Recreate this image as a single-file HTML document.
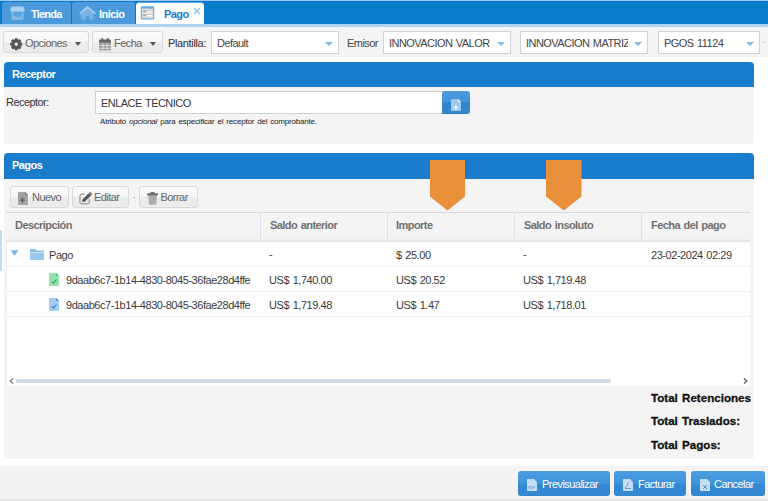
<!DOCTYPE html>
<html><head><meta charset="utf-8">
<style>
*{box-sizing:border-box;margin:0;padding:0}
html,body{width:768px;height:501px;overflow:hidden;background:#fff;font-family:"Liberation Sans",sans-serif;font-size:11px;color:#333;letter-spacing:-0.55px;word-spacing:1px}
div,span,svg{position:absolute}
.t{white-space:nowrap;line-height:1}
#topbar{left:0;top:0;width:768px;height:27px;background:#0a7bcd}
.topline{left:0;top:0;width:768px;height:1px;background:#9dc7e9}
.band{left:0;top:24px;width:768px;height:3px;background:#b2d2ec}
.tab{top:2px;height:22px;background:#4b9bdc;border-radius:3px 3px 0 0;color:#fff;font-weight:bold}
.tab.sel{background:#fff;color:#1c7ccc;top:3px;height:21px;box-shadow:0 -1px 0 #5aa5e0}
#toolbar{left:0;top:27px;width:768px;height:30px;background:#f4f4f4}
.btn{height:22px;border:1px solid #d9d9d9;border-radius:3px;background:linear-gradient(#fafafa 0,#f6f6f6 50%,#ebebeb 50%,#ececec 100%);color:#666}
.sbox{top:31px;height:23px;border:1px solid #d3d3d3;background:#fff;color:#444}
.caret{width:0;height:0;border-left:4px solid transparent;border-right:4px solid transparent;border-top:4px solid #80b9e6}
.dcaret{width:0;height:0;border-left:3px solid transparent;border-right:3px solid transparent;border-top:4px solid #555}
.panel{left:4px;width:750px;background:#f4f4f4;border-radius:4px}
.phead{left:0;top:0;width:750px;height:25px;background:#1a7dcb;border-radius:4px 4px 0 0;color:#fff;font-weight:bold}
.gh{color:#707070;font-weight:bold}
.cell{color:#3a3a3a;letter-spacing:-0.45px}
.vline{top:212px;width:1px;height:30px;background:#e0e0e0}
.hline{left:7px;width:743px;height:1px;background:#f1f1f1}
.tot{color:#111;font-weight:bold;font-size:11.6px;letter-spacing:0;-webkit-text-stroke:0.3px #111}
.fbtn{top:471px;height:25px;border-radius:3px;background:linear-gradient(#4b9de0 0%,#3f93d9 50%,#3589d2 55%,#3186d0 100%);color:#fff}
</style></head><body>
<div id="topbar">
  <div class="topline"></div>
  <div class="band"></div>
  <div class="tab" style="left:2px;width:69px">
    <svg style="left:8px;top:4px" width="15" height="14" viewBox="0 0 15 14"><rect x="1.5" y="4.5" width="12" height="9.5" rx="1" fill="#80b9e8"/><rect x="3.5" y="6" width="8" height="4.5" fill="#5ba1dd"/><path d="M2.5 0.4h10a1.5 1.5 0 0 1 1.4 1L14.6 4c0 1-.7 1.6-1.4 1.6s-1.4-.7-1.4-1.2c0 .5-.7 1.2-1.4 1.2s-1.4-.7-1.4-1.2c0 .5-.7 1.2-1.5 1.2s-1.4-.7-1.4-1.2c0 .5-.7 1.2-1.4 1.2S3.1 4.9 3.1 4.4c0 .5-.7 1.2-1.4 1.2S.4 5 .4 4l.7-2.6a1.5 1.5 0 0 1 1.4-1z" fill="#a9d0f0"/></svg>
    <span class="t" style="left:29px;top:7px;letter-spacing:-0.8px">Tienda</span></div>
  <div class="tab" style="left:72px;width:63px">
    <svg style="left:6px;top:3px" width="18" height="16" viewBox="0 0 18 16"><path d="M3.2 7.2L9.5 2.2 15.5 7.2V14.6H11.2V11H7.8V14.6H3.2Z" fill="#78b3e5"/><path d="M2.2 8.3L9.5 1.8 16.8 8.3" stroke="#a6cdef" stroke-width="1.7" fill="none" stroke-linecap="round" stroke-linejoin="round"/></svg>
    <span class="t" style="left:27px;top:7px">Inicio</span></div>
  <div class="tab sel" style="left:136px;width:68px">
    <svg style="left:4px;top:3px" width="15" height="14" viewBox="0 0 15 14"><rect x="0.8" y="0.2" width="13.4" height="13.4" rx="1.3" fill="#68ace0"/><rect x="2" y="2.6" width="11" height="9.6" fill="#e2e2e2"/><rect x="3" y="4.3" width="3.2" height="2" fill="#a8a8a8"/><rect x="3" y="8.3" width="3.2" height="2" fill="#a8a8a8"/><rect x="6.8" y="5" width="5.2" height="1.2" fill="#fafafa"/><rect x="6.8" y="9" width="5.2" height="1.2" fill="#fafafa"/><rect x="6.8" y="4" width="5.2" height="0.8" fill="#c8c8c8"/><rect x="6.8" y="8" width="5.2" height="0.8" fill="#c8c8c8"/></svg>
    <span class="t" style="left:28px;top:6px">Pago</span>
    <svg style="left:57px;top:3.5px" width="8" height="8" viewBox="0 0 8 8"><path d="M1 1L7 7M7 1L1 7" stroke="#92c5ec" stroke-width="1.5"/></svg>
  </div>
</div>
<div id="toolbar"></div>
<div class="btn" style="left:3px;top:31px;width:86px">
  <svg style="left:6px;top:6px" width="12.5" height="12.5" viewBox="0 0 12.5 12.5"><path fill="#555" fill-rule="evenodd" d="M10.65 4.59 L12.35 4.89 L12.35 7.61 L10.65 7.91 L10.53 8.19 L11.53 9.60 L9.60 11.53 L8.19 10.53 L7.91 10.65 L7.61 12.35 L4.89 12.35 L4.59 10.65 L4.31 10.53 L2.90 11.53 L0.97 9.60 L1.97 8.19 L1.85 7.91 L0.15 7.61 L0.15 4.89 L1.85 4.59 L1.97 4.31 L0.97 2.90 L2.90 0.97 L4.31 1.97 L4.59 1.85 L4.89 0.15 L7.61 0.15 L7.91 1.85 L8.19 1.97 L9.60 0.97 L11.53 2.90 L10.53 4.31Z M4.55 6.25 a1.70 1.70 0 1 0 3.40 0 a1.70 1.70 0 1 0 -3.40 0Z"/></svg>
  <span class="t" style="left:21px;top:6px">Opciones</span>
  <div class="dcaret" style="left:70.5px;top:9.5px"></div>
</div>
<div class="btn" style="left:92px;top:31px;width:71px">
  <svg style="left:6px;top:6px" width="12" height="12.5" viewBox="0 0 12 12.5"><rect x="0" y="1.5" width="12" height="3.5" rx="1" fill="#666"/><rect x="2.3" y="0" width="2" height="3" rx=".8" fill="#666"/><rect x="7.7" y="0" width="2" height="3" rx=".8" fill="#666"/><rect x="0" y="4.5" width="12" height="8" rx="1" fill="#9a9a9a"/><g fill="#e6e6e6"><rect x="3.6" y="5" width=".8" height="7.5"/><rect x="7.6" y="5" width=".8" height="7.5"/><rect x="0" y="7.2" width="12" height=".8"/><rect x="0" y="9.8" width="12" height=".8"/></g></svg>
  <span class="t" style="left:21px;top:6px">Fecha</span>
  <div class="dcaret" style="left:56.5px;top:9.5px"></div>
</div>
<span class="t" style="left:168px;top:38px;color:#333;letter-spacing:-0.35px">Plantilla:</span>
<div class="sbox" style="left:211px;width:128px"><span class="t" style="left:5px;top:6px">Default</span><div class="caret" style="left:113px;top:9.5px"></div></div>
<span class="t" style="left:347px;top:38px;color:#444">Emisor</span>
<div class="sbox" style="left:383px;width:128px"><span class="t" style="left:5px;top:6px">INNOVACION VALOR</span><div class="caret" style="left:113px;top:9.5px"></div></div>
<div class="sbox" style="left:520px;width:128px"><span class="t" style="left:5px;top:6px;width:102px;overflow:hidden">INNOVACION MATRIZ</span><div class="caret" style="left:113px;top:9.5px"></div></div>
<div class="sbox" style="left:658px;width:102px"><span class="t" style="left:5px;top:6px">PGOS 11124</span><div class="caret" style="left:87px;top:9.5px"></div></div>
<div style="left:763px;top:42px;width:3px;height:1px;background:#d8d8d8"></div>

<!-- Receptor panel -->
<div class="panel" style="top:62px;height:82px">
  <div class="phead"><span class="t" style="left:8px;top:7px">Receptor</span></div>
</div>
<span class="t" style="left:6px;top:97px;color:#333">Receptor:</span>
<div style="left:95px;top:91px;width:348px;height:23px;background:#fff;border:1px solid #cfcfcf;border-right:none"></div>
<span class="t" style="left:101px;top:98px;color:#383838">ENLACE TÉCNICO</span>
<div style="left:442px;top:91px;width:28px;height:23px;background:linear-gradient(#4a9bdc 0%,#4396d9 50%,#2f84cc 52%,#3586ce 100%);border-radius:3px 3px 3px 0;border-bottom:1px solid #2a78bd">
  <svg style="left:9px;top:8px" width="10" height="12" viewBox="0 0 10 12"><path d="M1 0h6l3 3v8a1 1 0 0 1-1 1H1a1 1 0 0 1-1-1V1a1 1 0 0 1 1-1z" fill="#9ec9ee"/><path d="M7 0l3 3H8a1 1 0 0 1-1-1z" fill="#e6f2fc"/><path d="M4.8 6.3v4.4M2.6 8.5h4.4" stroke="#f4f9fe" stroke-width="1.3"/></svg>
</div>
<span class="t" style="left:100px;top:118px;font-size:8px;letter-spacing:-0.2px;color:#222">Atributo <i>opcional</i> para especificar el receptor del comprobante.</span>

<!-- Pagos panel -->
<div class="panel" style="top:153px;height:306px">
  <div class="phead" style="height:26px"><span class="t" style="left:8px;top:7px">Pagos</span></div>
</div>
<div class="btn" style="left:10px;top:186px;width:59px">
  <svg style="left:7px;top:5px" width="10" height="13" viewBox="0 0 10 13"><path d="M1 0h6l3 3v9a1 1 0 0 1-1 1H1a1 1 0 0 1-1-1V1a1 1 0 0 1 1-1z" fill="#a3a3a3"/><path d="M7 0v3h3z" fill="#7a7a7a"/><path d="M4.5 5.8v4.6M2.2 8.1h4.6" stroke="#5a5a5a" stroke-width="1.3"/></svg>
  <span class="t" style="left:21px;top:5px">Nuevo</span></div>
<div class="btn" style="left:72px;top:186px;width:57px">
  <svg style="left:6px;top:5px" width="14" height="13" viewBox="0 0 14 13"><path d="M5.8 2.35H2.9a2 2 0 0 0-2 2V9.85a2 2 0 0 0 2 2H8.3a2 2 0 0 0 2-2V7.2" fill="none" stroke="#a8a8a8" stroke-width="1.5"/><path d="M3.2 10L3.48 7.46 11.07-.13 13.33 2.13 5.74 9.72z" fill="#555"/><path d="M12.06 3.4L9.8 1.14" stroke="#ededed" stroke-width="0.7"/></svg>
  <span class="t" style="left:21px;top:5px">Editar</span></div>
<div style="left:133px;top:197px;width:2px;height:1px;background:#bbb"></div>
<div class="btn" style="left:139px;top:186px;width:59px">
  <svg style="left:7px;top:5px" width="12" height="13" viewBox="0 0 12 13"><path d="M1.2 3.2h8.8l-.7 8.6a1 1 0 0 1-1 .9H2.9a1 1 0 0 1-1-.9z" fill="#ababab"/><ellipse cx="5.6" cy="1.3" rx="2.8" ry="1.2" fill="#707070"/><rect x="0" y="1.2" width="11.2" height="2.3" rx="1.1" fill="#707070"/></svg>
  <span class="t" style="left:20.5px;top:5px">Borrar</span></div>

<!-- grid -->
<div style="left:6px;top:212px;width:744px;height:1px;background:#d6d6d6"></div>
<div style="left:6px;top:239px;width:744px;height:1px;background:#efefef"></div><div style="left:6px;top:240px;width:744px;height:2px;background:#e7e7e7"></div>
<div style="left:6px;top:242px;width:744px;height:144px;background:#fff;border-left:1px solid #f1f1f1"></div>
<div class="vline" style="left:260px"></div>
<div class="vline" style="left:387px"></div>
<div class="vline" style="left:514px"></div>
<div class="vline" style="left:641px"></div>
<span class="t gh" style="left:15px;top:220px">Descripción</span>
<span class="t gh" style="left:270px;top:220px">Saldo anterior</span>
<span class="t gh" style="left:396px;top:220px">Importe</span>
<span class="t gh" style="left:524px;top:220px">Saldo insoluto</span>
<span class="t gh" style="left:651px;top:220px">Fecha del pago</span>
<div class="hline" style="top:266px"></div>
<div class="hline" style="top:291px"></div>
<div class="hline" style="top:316px"></div>

<svg style="left:10px;top:250px" width="9" height="7" viewBox="0 0 9 7"><path d="M0.6 0.3h7.8L4.5 6z" fill="#7db5e3"/></svg>
<svg style="left:30px;top:249px" width="14" height="11" viewBox="0 0 14 11"><path d="M0 0h5l1.5 1.5H14V3H0z" fill="#8dbfe8"/><path d="M0 3.5h14V11H0z" fill="#9ac8ee"/></svg>
<span class="t cell" style="left:49px;top:250px">Pago</span>
<span class="t cell" style="left:269px;top:249px">-</span>
<span class="t cell" style="left:396px;top:250px">$ 25.00</span>
<span class="t cell" style="left:523px;top:249px">-</span>
<span class="t cell" style="left:651px;top:250px">23-02-2024 02:29</span>

<svg style="left:49px;top:273px" width="10" height="13" viewBox="0 0 10 13"><path d="M1.2 0h5.8l3 3v8.8a1.2 1.2 0 0 1-1.2 1.2H1.2A1.2 1.2 0 0 1 0 11.8V1.2A1.2 1.2 0 0 1 1.2 0z" fill="#93e0ab"/><path d="M7 0l3 3H8a1 1 0 0 1-1-1z" fill="#40c26c"/><path d="M2.6 8.4l1.7 1.6 3.2-3.4" stroke="#2fb35c" stroke-width="1.3" fill="none"/></svg>
<span class="t cell" style="left:66px;top:275px">9daab6c7-1b14-4830-8045-36fae28d4ffe</span>
<span class="t cell" style="left:269px;top:275px">US$ 1,740.00</span>
<span class="t cell" style="left:396px;top:275px">US$ 20.52</span>
<span class="t cell" style="left:523px;top:275px">US$ 1,719.48</span>

<svg style="left:49px;top:298px" width="10" height="13" viewBox="0 0 10 13"><path d="M1.2 0h5.8l3 3v8.8a1.2 1.2 0 0 1-1.2 1.2H1.2A1.2 1.2 0 0 1 0 11.8V1.2A1.2 1.2 0 0 1 1.2 0z" fill="#a5cbee"/><path d="M7 0l3 3H8a1 1 0 0 1-1-1z" fill="#3d8ad6"/><path d="M2.6 8.4l1.7 1.6 3.2-3.4" stroke="#3b86d2" stroke-width="1.3" fill="none"/></svg>
<span class="t cell" style="left:66px;top:300px">9daab6c7-1b14-4830-8045-36fae28d4ffe</span>
<span class="t cell" style="left:269px;top:300px">US$ 1,719.48</span>
<span class="t cell" style="left:396px;top:300px">US$ 1.47</span>
<span class="t cell" style="left:523px;top:300px">US$ 1,718.01</span>

<!-- scrollbar -->
<div style="left:16px;top:378.5px;width:595px;height:4.5px;background:#d2dce5;border-radius:1px"></div>
<svg style="left:9px;top:378px" width="5" height="6" viewBox="0 0 5 6"><path d="M4 0.5L1.3 3 4 5.5" stroke="#888" stroke-width="1.5" fill="none"/></svg>
<svg style="left:743px;top:378px" width="5" height="6" viewBox="0 0 5 6"><path d="M1 0.5L3.7 3 1 5.5" stroke="#666" stroke-width="1.5" fill="none"/></svg>
<div style="left:0;top:230px;width:2px;height:41px;background:#c3def3"></div>

<!-- totals -->
<span class="t tot" style="left:651px;top:392px">Total Retenciones</span>
<span class="t tot" style="left:651px;top:415px">Total Traslados:</span>
<span class="t tot" style="left:651px;top:439px">Total Pagos:</span>

<!-- orange arrows -->
<svg style="left:430px;top:160px" width="36" height="51" viewBox="0 0 36 51"><path d="M0 0h35v36.5L17.5 50.5 0 36.5z" fill="#e8903a"/></svg>
<svg style="left:546px;top:160px" width="36" height="51" viewBox="0 0 36 51"><path d="M0 0h35.5v36.5L17.75 50.5 0 36.5z" fill="#e8903a"/></svg>

<!-- footer -->
<div style="left:0;top:466px;width:768px;height:33px;background:#f3f3f3"></div>
<div style="left:0;top:499px;width:768px;height:2px;background:#e8e8e8"></div>
<div class="fbtn" style="left:518px;width:92px">
  <svg style="left:9px;top:8px" width="10" height="12" viewBox="0 0 10 12"><path d="M0.8 0h6.2l3 3v8.2a.8.8 0 0 1-.8.8H.8a.8.8 0 0 1-.8-.8V.8A.8.8 0 0 1 .8 0z" fill="#c4def4"/><text x="1" y="10" font-size="4" fill="#4a90d0" font-family="Liberation Sans">PDF</text></svg>
  <span class="t" style="left:24px;top:8px">Previsualizar</span></div>
<div class="fbtn" style="left:614px;width:72px">
  <svg style="left:9px;top:8px" width="10" height="12" viewBox="0 0 10 12"><path d="M0.8 0h6.2l3 3v8.2a.8.8 0 0 1-.8.8H.8a.8.8 0 0 1-.8-.8V.8A.8.8 0 0 1 .8 0z" fill="#c4def4"/><path d="M2 9c2-1 3-4 3-6M2 9.5h6" stroke="#4a90d0" stroke-width=".8" fill="none"/></svg>
  <span class="t" style="left:24px;top:8px">Facturar</span></div>
<div class="fbtn" style="left:691px;width:74px">
  <svg style="left:9px;top:8px" width="10" height="12" viewBox="0 0 10 12"><path d="M0.8 0h6.2l3 3v8.2a.8.8 0 0 1-.8.8H.8a.8.8 0 0 1-.8-.8V.8A.8.8 0 0 1 .8 0z" fill="#c4def4"/><path d="M3 6l4 4M7 6l-4 4" stroke="#4a90d0" stroke-width="1"/></svg>
  <span class="t" style="left:23px;top:8px">Cancelar</span></div>
</body></html>
